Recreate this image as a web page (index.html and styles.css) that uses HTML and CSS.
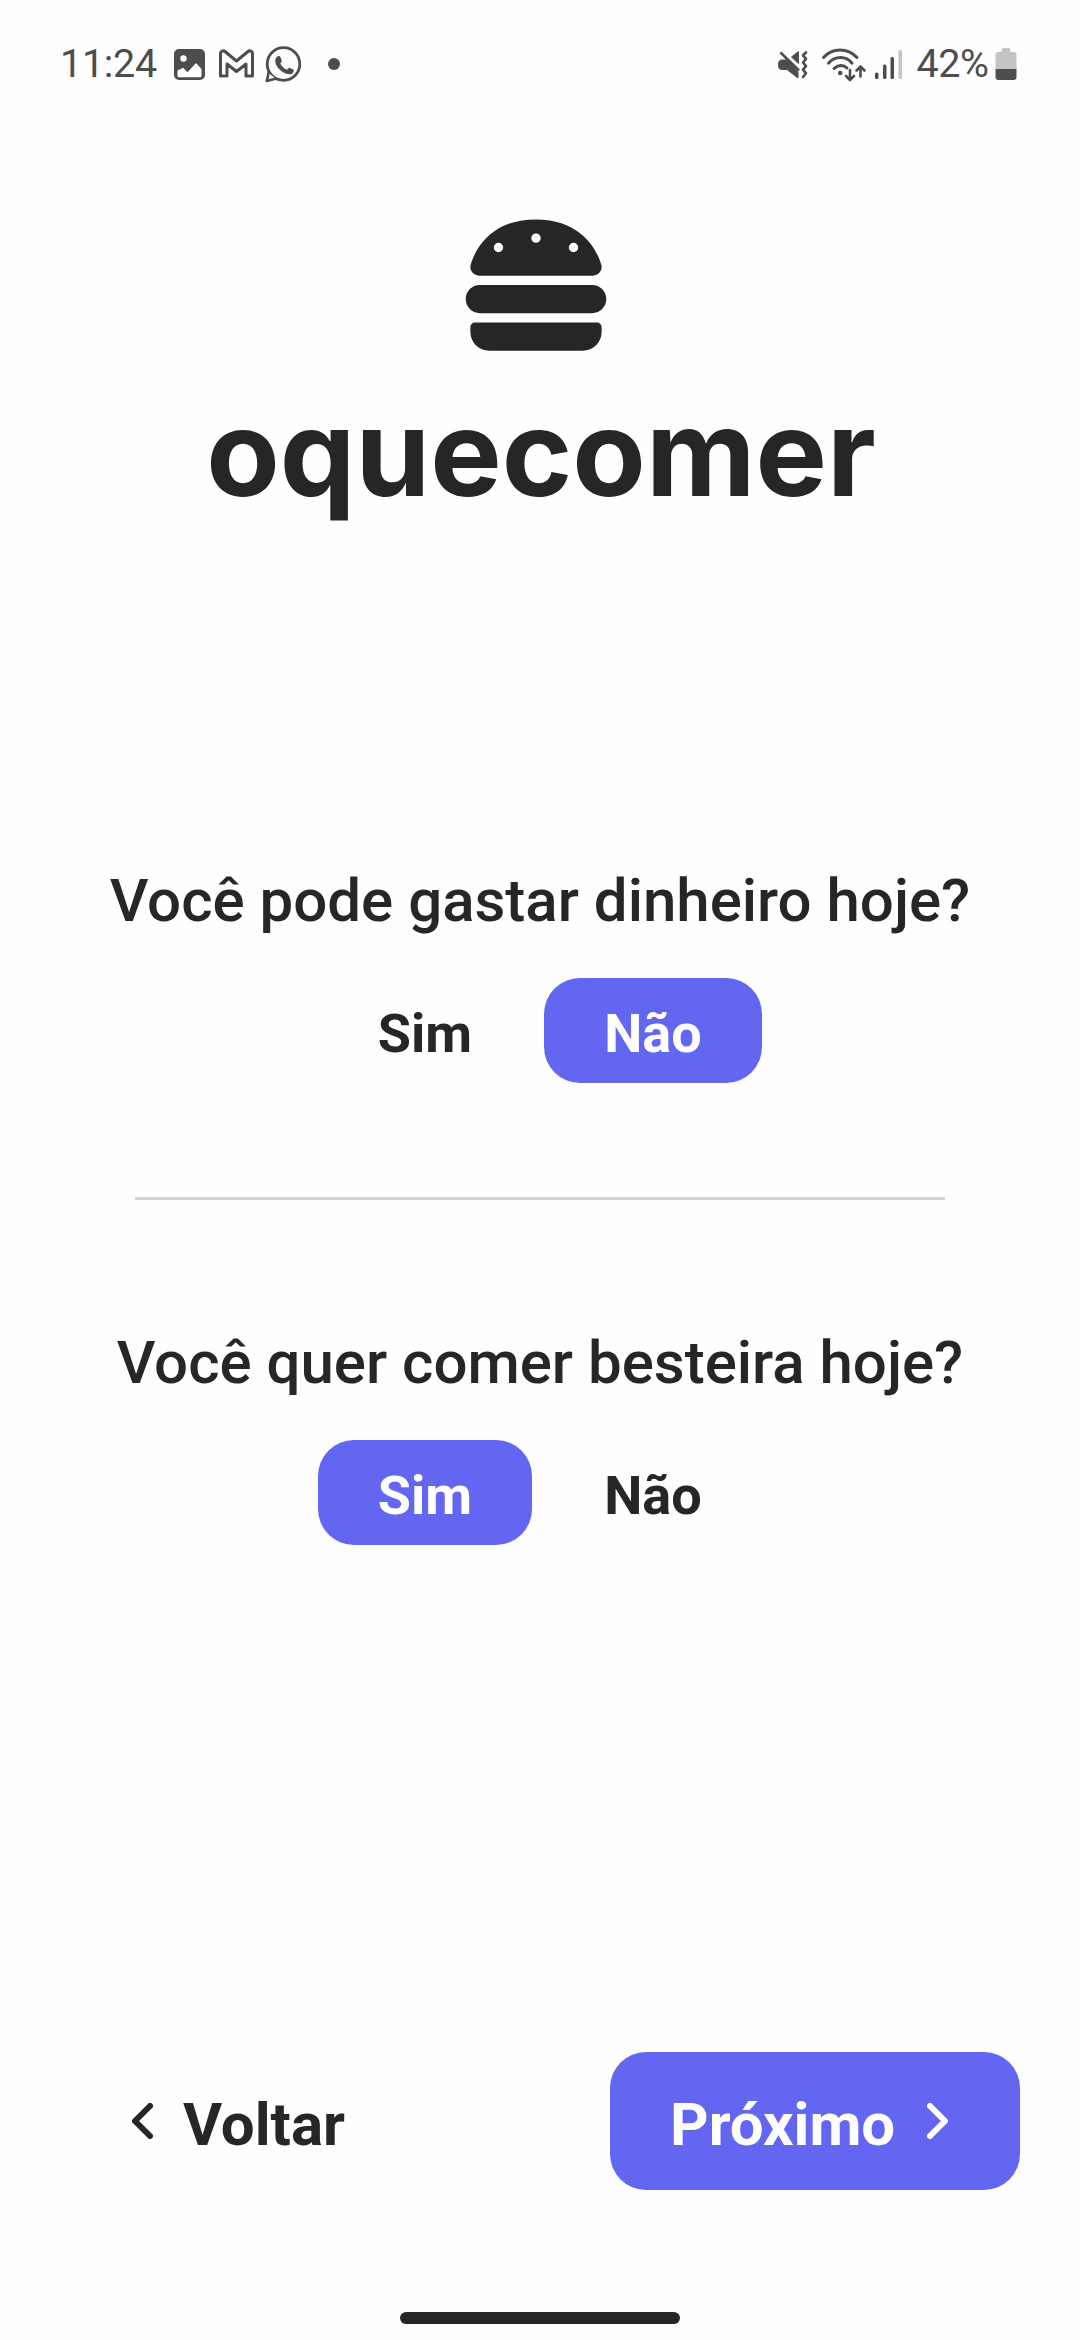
FILE: index.html
```html
<!DOCTYPE html>
<html lang="pt-BR">
<head>
<meta charset="utf-8">
<title>oquecomer</title>
<link rel="stylesheet" href="styles.css">
</head>
<body>
<div class="screen">
  <header class="status">
    <div class="status-left">
      <span class="clock">11:24</span>
      <svg class="status-icons" width="168" height="40" viewBox="172 44 168 40">
        <path fill="#4d4d4d" fill-rule="evenodd" d="M179 49h21a5 5 0 0 1 5 5v21a5 5 0 0 1-5 5h-21a5 5 0 0 1-5-5V54a5 5 0 0 1 5-5zM183.500 55.300a3.200 3.200 0 1 0 0 6.400 3.200 3.200 0 0 0 0-6.400zM177.500 70.500v5.200a1.500 1.500 0 0 0 1.500 1.500h21a1.500 1.500 0 0 0 1.500-1.500V69l-5.500-6-8.500 9.200-4.300-4.500z"/>
        <path fill="none" stroke="#4d4d4d" stroke-width="3" stroke-linejoin="round" d="M220.500 76V53.500c0-2 2.500-3.500 4.500-2L236.500 61 248 51.500c2-1.500 4.500 0 4.500 2V76h-6.500V64l-9.500 7.500-9.500-7.500v12z"/>
        <circle cx="283.500" cy="64" r="16.300" fill="none" stroke="#4d4d4d" stroke-width="2.800"/>
        <path fill="#fff" d="M266 71l10 8-9 2z"/>
        <path fill="none" stroke="#4d4d4d" stroke-width="2.600" stroke-linejoin="round" d="M269 71l-2.200 10 9.500-2.500"/>
        <path fill="#4d4d4d" d="M277.500 56.500c1.200-.8 2.400-.4 2.900.8l1.400 3.300c.4 1-.9 2.300-1.500 3 1.500 3 3.800 5 6.800 6.200.8-.8 1.700-2.300 2.700-1.900l3.600 1.700c1 .5 0 3.300-1.200 4.100-4.500 3-16.800-4.700-17-12.700 0-2 .8-3.500 2.300-4.500z"/>
        <circle cx="334" cy="64" r="6" fill="#4d4d4d"/>
      </svg>
    </div>
    <div class="status-right">
      <svg class="status-icons" width="128" height="40" viewBox="776 44 128 40">
        <path fill="#4d4d4d" stroke="#4d4d4d" stroke-linejoin="round" d="M781.500 60h5.500l11 12v6l-11-8.500h-5.500c-3 0-3-3.500-3-4.500s0-5 3-5zM791.500 57l7-5.500v12z"/>
        <path fill="none" stroke="#4d4d4d" stroke-width="2.600" d="M780.500 52.500l18.500 18"/>
        <path fill="none" stroke="#4d4d4d" stroke-width="2.600" stroke-linecap="round" stroke-linejoin="round" d="M806 52.500l-3 2.800 3 3.600-3 3.600 3 3.600-3 3.600 3 3.600-3 3.700"/>
        <g fill="none" stroke="#4d4d4d" stroke-width="3" stroke-linecap="round">
          <path d="M823.500 57.500c9-10 24-10 33.500 0M828.500 63.200c6.500-7.500 17.500-7.500 23.500 0M834 68.500c4-4 9.500-4 13-.5"/>
          <path stroke-width="2.600" stroke-linejoin="round" d="M850 70v9.500m-4-3.500l4 4 4-4M860.500 76.500V67m-4 3.500l4-4 4 4"/>
        </g>
        <circle cx="840.200" cy="73" r="2.300" fill="#4d4d4d"/>
        <rect x="875" y="72.500" width="3.500" height="6.500" rx="1.500" fill="#4d4d4d"/>
        <rect x="883" y="64.500" width="3.500" height="14.500" rx="1.500" fill="#4d4d4d"/>
        <rect x="890.500" y="57" width="3.500" height="22" rx="1.500" fill="#4d4d4d"/>
        <rect x="898.500" y="50" width="3.500" height="29" rx="1.500" fill="#c4c4c4"/>
      </svg>
      <span class="percent">42%</span>
      <svg class="battery" width="22" height="40" viewBox="994.500 44 22 40">
        <path fill="#c4c4c4" d="M1001 52v-2a2 2 0 0 1 2-2h5a2 2 0 0 1 2 2v2h3a3 3 0 0 1 3 3v14h-21V55a3 3 0 0 1 3-3z"/>
        <path fill="#4d4d4d" d="M995 69h21v8a3 3 0 0 1-3 3h-15a3 3 0 0 1-3-3z"/>
      </svg>
    </div>
  </header>

  <div class="brand">
    <svg class="burger" width="150" height="150" viewBox="0 0 512 512">
      <path d="M61.100 224C45 224 32 211 32 194.900c0-1.900.2-3.700.6-5.600C37.900 168.300 78.800 32 256 32s218.100 136.300 223.400 157.300c.5 1.900.6 3.700.6 5.600 0 16.100-13 29.100-29.100 29.100H61.100zM144 128a16 16 0 1 0-32 0 16 16 0 1 0 32 0zm240 16a16 16 0 1 0 0-32 16 16 0 1 0 0 32zM272 96a16 16 0 1 0-32 0 16 16 0 1 0 32 0zM16 304c0-26.500 21.500-48 48-48h384c26.500 0 48 21.500 48 48s-21.500 48-48 48H64c-26.500 0-48-21.500-48-48zm16 96c0-8.800 7.200-16 16-16h416c8.800 0 16 7.200 16 16v16c0 35.300-28.700 64-64 64H96c-35.300 0-64-28.700-64-64v-16z"/>
    </svg>
    <h1 class="title">oquecomer</h1>
  </div>

  <main class="questions">
    <section class="question">
      <h2 class="prompt">Você pode gastar dinheiro hoje?</h2>
      <div class="options">
        <button class="option sim">Sim</button>
        <button class="option nao selected">Não</button>
      </div>
    </section>
    <hr class="divider">
    <section class="question">
      <h2 class="prompt">Você quer comer besteira hoje?</h2>
      <div class="options">
        <button class="option sim selected">Sim</button>
        <button class="option nao">Não</button>
      </div>
    </section>
  </main>

  <footer class="actions">
    <button class="action back">
      <svg class="chevron" width="21" height="36" viewBox="0 0 21 36"><path d="M18 3L3 18l15 15"/></svg>
      <span>Voltar</span>
    </button>
    <button class="action next">
      <span>Próximo</span>
      <svg class="chevron" width="21" height="36" viewBox="0 0 21 36"><path d="M3 3l15 15L3 33"/></svg>
    </button>
  </footer>
  <div class="home-bar"></div>
</div>
</body>
</html>
```
FILE: styles.css
```css
* {
  box-sizing: border-box;
}

body {
  margin: 0;
  background: #fefefe;
  color: #262626;
  font-family: Roboto, sans-serif;
}

.screen {
  display: flex;
  flex-direction: column;
  width: 1080px;
  height: 2340px;
  overflow: hidden;
}

.status {
  display: flex;
  justify-content: space-between;
  height: 128px;
  padding: 0 63.500px 0 60px;
  color: #4d4d4d;
}

.status-left,
.status-right {
  display: flex;
  align-items: center;
}

.clock,
.percent {
  font-size: 39.500px;
  line-height: 40px;
  white-space: nowrap;
}

.clock {
  width: 112px;
  letter-spacing: -0.3px;
}

.percent {
  width: 78px;
  margin-left: 12.500px;
  letter-spacing: -0.5px;
}

.brand {
  display: flex;
  flex-direction: column;
  align-items: center;
  margin-top: 81.500px;
}

.burger {
  margin-right: 7.500px;
  fill: #262626;
}

.title {
  height: 146px;
  margin: 20px 0 0;
  padding-left: 2px;
  font: 700 120px/146px Inter, sans-serif;
}

.questions {
  margin-top: 339px;
}

.question {
  display: flex;
  flex-direction: column;
  align-items: center;
}

.prompt {
  margin: 0;
  font-size: 60px;
  font-weight: 500;
  line-height: 72px;
  white-space: nowrap;
}

.options {
  display: flex;
  gap: 12px;
  margin-top: 41.500px;
}

.option,
.action {
  border: 0;
  border-radius: 36px;
  background: transparent;
  color: #262626;
  font-family: inherit;
  font-weight: 700;
}

.option {
  height: 105px;
  padding: 6px 0 0;
  font-size: 54px;
}

.sim {
  width: 214px;
}

.nao {
  width: 218px;
}

.option.selected,
.next {
  background: #6366f1;
  color: #fff;
}

.divider {
  width: 810px;
  height: 3px;
  margin: 114px auto 126.500px;
  border: 0;
  background: #d4d4d4;
}

.actions {
  display: flex;
  justify-content: space-between;
  margin-top: auto;
  padding: 0 60px 0 72px;
}

.action {
  display: flex;
  align-items: center;
  height: 138px;
  padding: 0 60px;
  font-size: 60px;
}

.action span {
  padding-top: 7px;
}

.back {
  gap: 30px;
}

.next {
  width: 410px;
  justify-content: space-between;
  padding-right: 72px;
}

.chevron {
  fill: none;
  stroke: currentColor;
  stroke-width: 6;
  stroke-linecap: round;
  stroke-linejoin: round;
}

.home-bar {
  width: 280px;
  height: 12px;
  margin: 122px auto 16px;
  border-radius: 6px;
  background: #262626;
}
```
